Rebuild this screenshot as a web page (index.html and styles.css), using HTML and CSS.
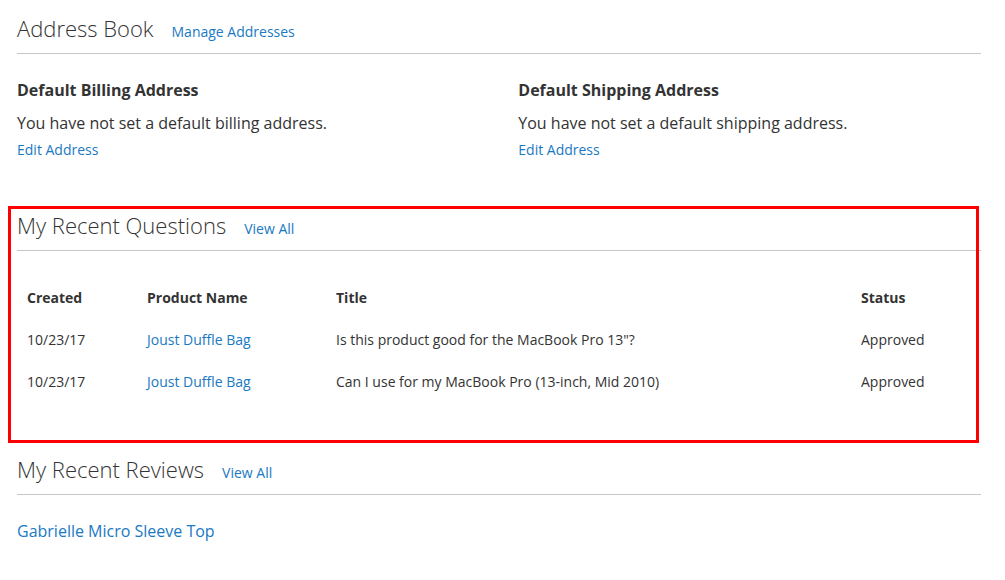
FILE: index.html
```html
<!DOCTYPE html>
<html lang="en">
<head>
    <meta charset="UTF-8">
    <meta name="viewport" content="width=device-width, initial-scale=1.0">
    <title>My Account</title>
    <link rel="stylesheet" href="styles.css">
</head>
<body>
    <div class="account-content">
        <div class="block block-addresses">
            <div class="block-title">
                <strong>Address Book</strong>
                <a href="#" class="action">Manage Addresses</a>
            </div>
            <div class="block-content boxes">
                <div class="box">
                    <strong class="box-title">Default Billing Address</strong>
                    <p class="box-text">You have not set a default billing address.</p>
                    <a href="#" class="box-action">Edit Address</a>
                </div>
                <div class="box">
                    <strong class="box-title">Default Shipping Address</strong>
                    <p class="box-text">You have not set a default shipping address.</p>
                    <a href="#" class="box-action">Edit Address</a>
                </div>
            </div>
        </div>

        <div class="block block-questions">
            <div class="highlight"></div>
            <div class="block-title">
                <strong>My Recent Questions</strong>
                <a href="#" class="action">View All</a>
            </div>
            <div class="block-content questions-content">
                <table class="data-table">
                    <colgroup>
                        <col class="col-created">
                        <col class="col-product">
                        <col class="col-title">
                        <col class="col-status">
                    </colgroup>
                    <thead>
                        <tr>
                            <th>Created</th>
                            <th>Product Name</th>
                            <th>Title</th>
                            <th>Status</th>
                        </tr>
                    </thead>
                    <tbody>
                        <tr>
                            <td>10/23/17</td>
                            <td><a href="#">Joust Duffle Bag</a></td>
                            <td>Is this product good for the MacBook Pro 13"?</td>
                            <td>Approved</td>
                        </tr>
                        <tr>
                            <td>10/23/17</td>
                            <td><a href="#">Joust Duffle Bag</a></td>
                            <td>Can I use for my MacBook Pro (13-inch, Mid 2010)</td>
                            <td>Approved</td>
                        </tr>
                    </tbody>
                </table>
            </div>
        </div>

        <div class="block block-reviews">
            <div class="block-title">
                <strong>My Recent Reviews</strong>
                <a href="#" class="action">View All</a>
            </div>
            <div class="block-content">
                <a href="#" class="review-link">Gabrielle Micro Sleeve Top</a>
            </div>
        </div>
    </div>
</body>
</html>
```

FILE: styles.css
```css
body {
    font-family: "Open Sans", "Liberation Sans", sans-serif;
    font-size: 14px;
    line-height: 20px;
    color: #333;
    background-color: #ffffff;
    margin: 0;
    padding: 0;
}
a {
    color: #1979c3;
    text-decoration: none;
}
.account-content {
    width: 964px;
    padding: 14px 0 0 17px;
}
.block {
    position: relative;
}
.block-addresses {
    margin-bottom: 51px;
}
.block-questions {
    margin-bottom: 52px;
}
.block-title {
    display: flex;
    align-items: baseline;
    padding-bottom: 11px;
    border-bottom: 1px solid #c6c6c6;
    margin-bottom: 25px;
}
.block-title strong {
    font-size: 22px;
    font-weight: 300;
    line-height: 28px;
}
.block-title .action {
    font-size: 14px;
    line-height: 20px;
    margin-left: 18px;
}
.boxes {
    display: flex;
    justify-content: space-between;
}
.box {
    width: 48%;
}
.box-title {
    display: block;
    font-size: 16px;
    font-weight: 700;
    line-height: 22px;
    margin-bottom: 10px;
}
.box-text {
    font-size: 16px;
    line-height: 24px;
    margin: 0 0 5px;
}
.box-action {
    display: block;
    font-size: 14px;
    line-height: 20px;
}
.questions-content {
    padding-top: 1px;
}
.data-table {
    width: 100%;
    border-collapse: collapse;
    border-spacing: 0;
    table-layout: fixed;
}
.data-table th, .data-table td {
    text-align: left;
    padding: 11px 10px;
    line-height: 20px;
    vertical-align: top;
}
.data-table th {
    font-weight: 700;
}
.col-created {
    width: 120px;
}
.col-product {
    width: 189px;
}
.col-title {
    width: 525px;
}
.col-status {
    width: 130px;
}
.review-link {
    font-size: 16px;
    line-height: 22px;
}
.highlight {
    position: absolute;
    left: -9px;
    top: -5px;
    width: 965px;
    height: 231px;
    border: 3px solid #ff0000;
    pointer-events: none;
}
```
